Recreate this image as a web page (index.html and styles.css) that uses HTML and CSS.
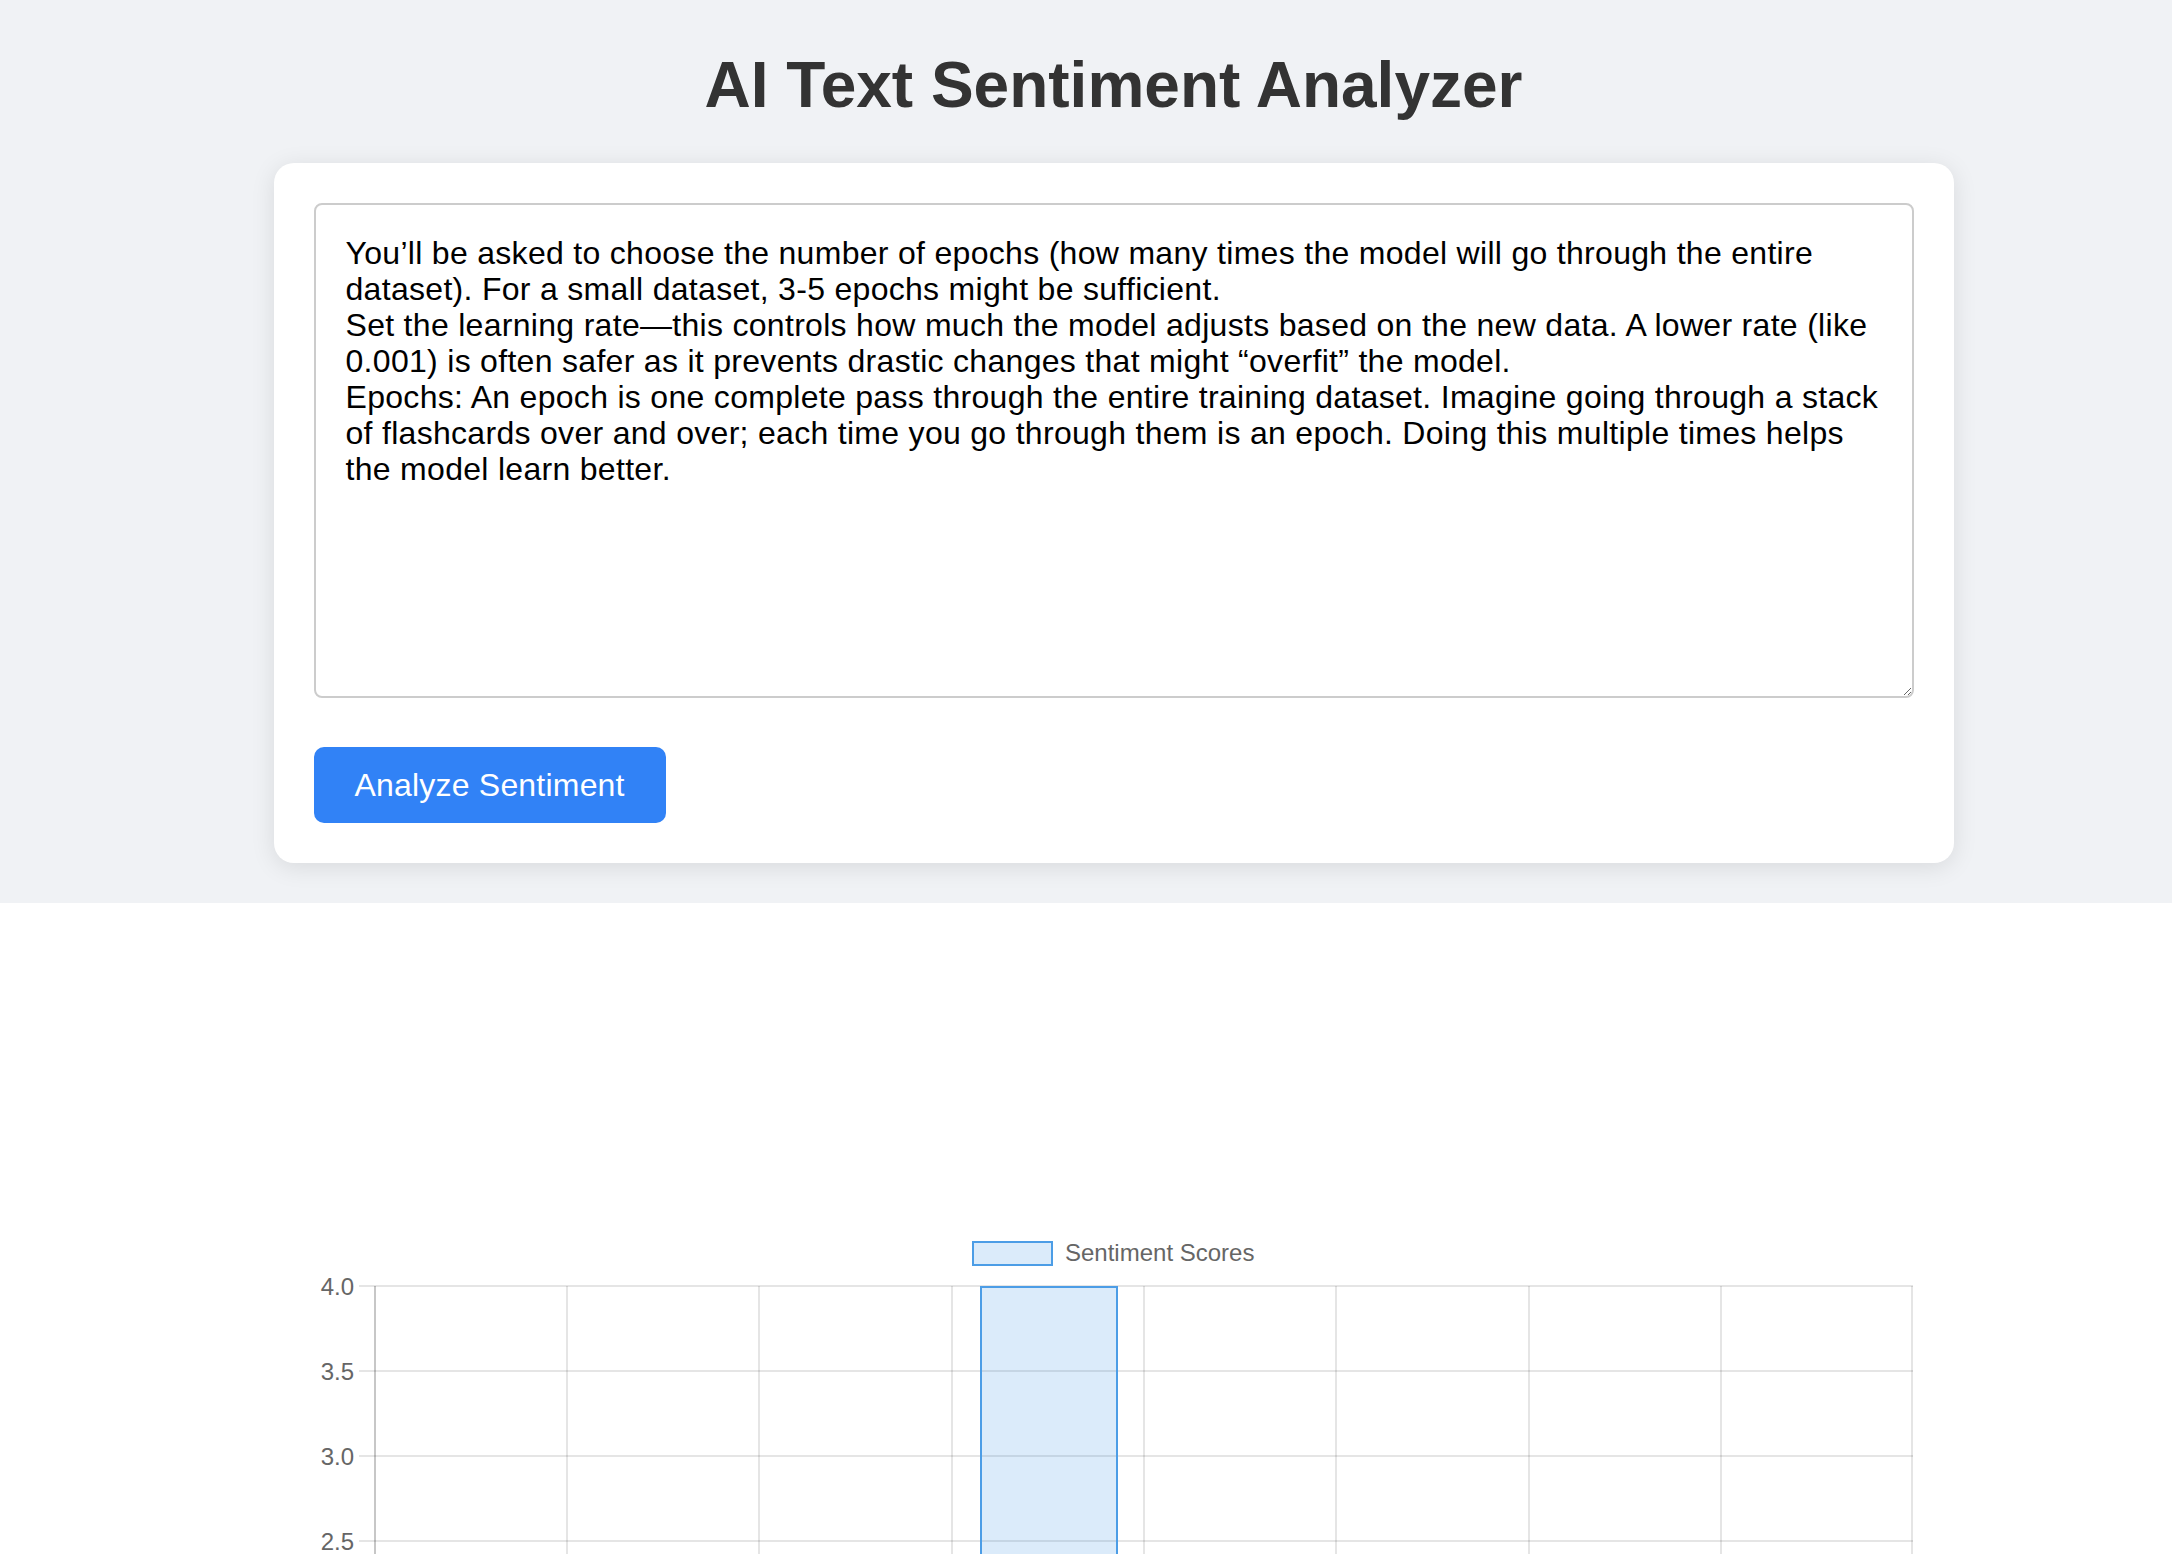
FILE: index.html
```html
<!DOCTYPE html>
<html lang="en">
  <head>
    <meta charset="UTF-8" />
    <meta name="viewport" content="width=device-width, initial-scale=1.0" />
    <title>AI Text Sentiment Analyzer</title>
    <link rel="stylesheet" href="styles.css">
  </head>
  <body>
    <div class="page">
      <header class="top">
        <h1 class="title">AI Text Sentiment Analyzer</h1>

        <div class="card">
          <textarea id="textInput" class="text-input">You’ll be asked to choose the number of epochs (how many times the model will go through the entire dataset). For a small dataset, 3-5 epochs might be sufficient.
Set the learning rate—this controls how much the model adjusts based on the new data. A lower rate (like 0.001) is often safer as it prevents drastic changes that might “overfit” the model.
Epochs: An epoch is one complete pass through the entire training dataset. Imagine going through a stack of flashcards over and over; each time you go through them is an epoch. Doing this multiple times helps the model learn better.</textarea>
          <button type="button" class="analyze-btn">Analyze Sentiment</button>
        </div>
      </header>

      <section class="results">
        <svg class="chart" width="1599" height="360" viewBox="0 0 1599 360">
          <!-- legend -->
          <rect x="659" y="42" width="79" height="23" class="bar" />
          <text x="751" y="61" class="chart-text">Sentiment Scores</text>

          <!-- horizontal grid -->
          <g stroke="rgba(0,0,0,0.1)" stroke-width="2">
            <line x1="45" y1="86" x2="1599" y2="86" />
            <line x1="45" y1="171" x2="1599" y2="171" />
            <line x1="45" y1="256" x2="1599" y2="256" />
            <line x1="45" y1="341" x2="1599" y2="341" />
          </g>

          <!-- vertical grid -->
          <g stroke="rgba(0,0,0,0.1)" stroke-width="2">
            <line x1="253" y1="86" x2="253" y2="360" />
            <line x1="445" y1="86" x2="445" y2="360" />
            <line x1="638" y1="86" x2="638" y2="360" />
            <line x1="830" y1="86" x2="830" y2="360" />
            <line x1="1022" y1="86" x2="1022" y2="360" />
            <line x1="1215" y1="86" x2="1215" y2="360" />
            <line x1="1407" y1="86" x2="1407" y2="360" />
            <line x1="1598" y1="86" x2="1598" y2="360" />
          </g>
          <line x1="61" y1="86" x2="61" y2="360" stroke="rgba(0,0,0,0.22)" stroke-width="2" />

          <!-- y labels -->
          <g class="chart-text" text-anchor="end">
            <text x="40" y="95">4.0</text>
            <text x="40" y="180">3.5</text>
            <text x="40" y="265">3.0</text>
            <text x="40" y="350">2.5</text>
          </g>

          <!-- bar -->
          <rect x="667" y="87" width="136" height="300" class="bar" />
        </svg>
      </section>
    </div>
  </body>
</html>
```

FILE: styles.css
```css
html {
  overflow: hidden;
}

body {
  margin: 0;
  background-color: #ffffff;
  font-family: "Liberation Sans", Arial, Helvetica, sans-serif;
}

.page {
  width: 2227px;
}

.top {
  background-color: #f0f2f5;
  padding: 48px 0 40px;
}

.title {
  margin: 0 0 41px;
  text-align: center;
  font-size: 64px;
  line-height: 74px;
  font-weight: bold;
  color: #333333;
}

.card {
  width: 1680px;
  box-sizing: border-box;
  margin: 0 auto;
  padding: 40px;
  background-color: #ffffff;
  border-radius: 20px;
  box-shadow: 0 4px 24px rgba(0, 0, 0, 0.1);
}

.text-input {
  display: block;
  width: 100%;
  height: 495px;
  box-sizing: border-box;
  margin: 0 0 49px;
  padding: 30px;
  border: 2px solid #cccccc;
  border-radius: 8px;
  font-family: "Liberation Sans", Arial, sans-serif;
  font-size: 32px;
  line-height: 36px;
  letter-spacing: 0.3px;
  color: #000000;
  resize: vertical;
}

.analyze-btn {
  display: block;
  height: 76px;
  padding: 0 41px;
  border: none;
  border-radius: 10px;
  background-color: #3182f6;
  color: #ffffff;
  font-family: "Liberation Sans", Arial, sans-serif;
  font-size: 32px;
  letter-spacing: 0.2px;
  cursor: pointer;
}

.results {
  padding-top: 297px;
}

.chart {
  display: block;
  margin: 0 auto;
}

.chart-text {
  font-family: "Liberation Sans", Arial, sans-serif;
  font-size: 24px;
  fill: #666666;
}

.bar {
  fill: rgba(54, 142, 225, 0.18);
  stroke: #4c9de6;
  stroke-width: 2;
}
```
